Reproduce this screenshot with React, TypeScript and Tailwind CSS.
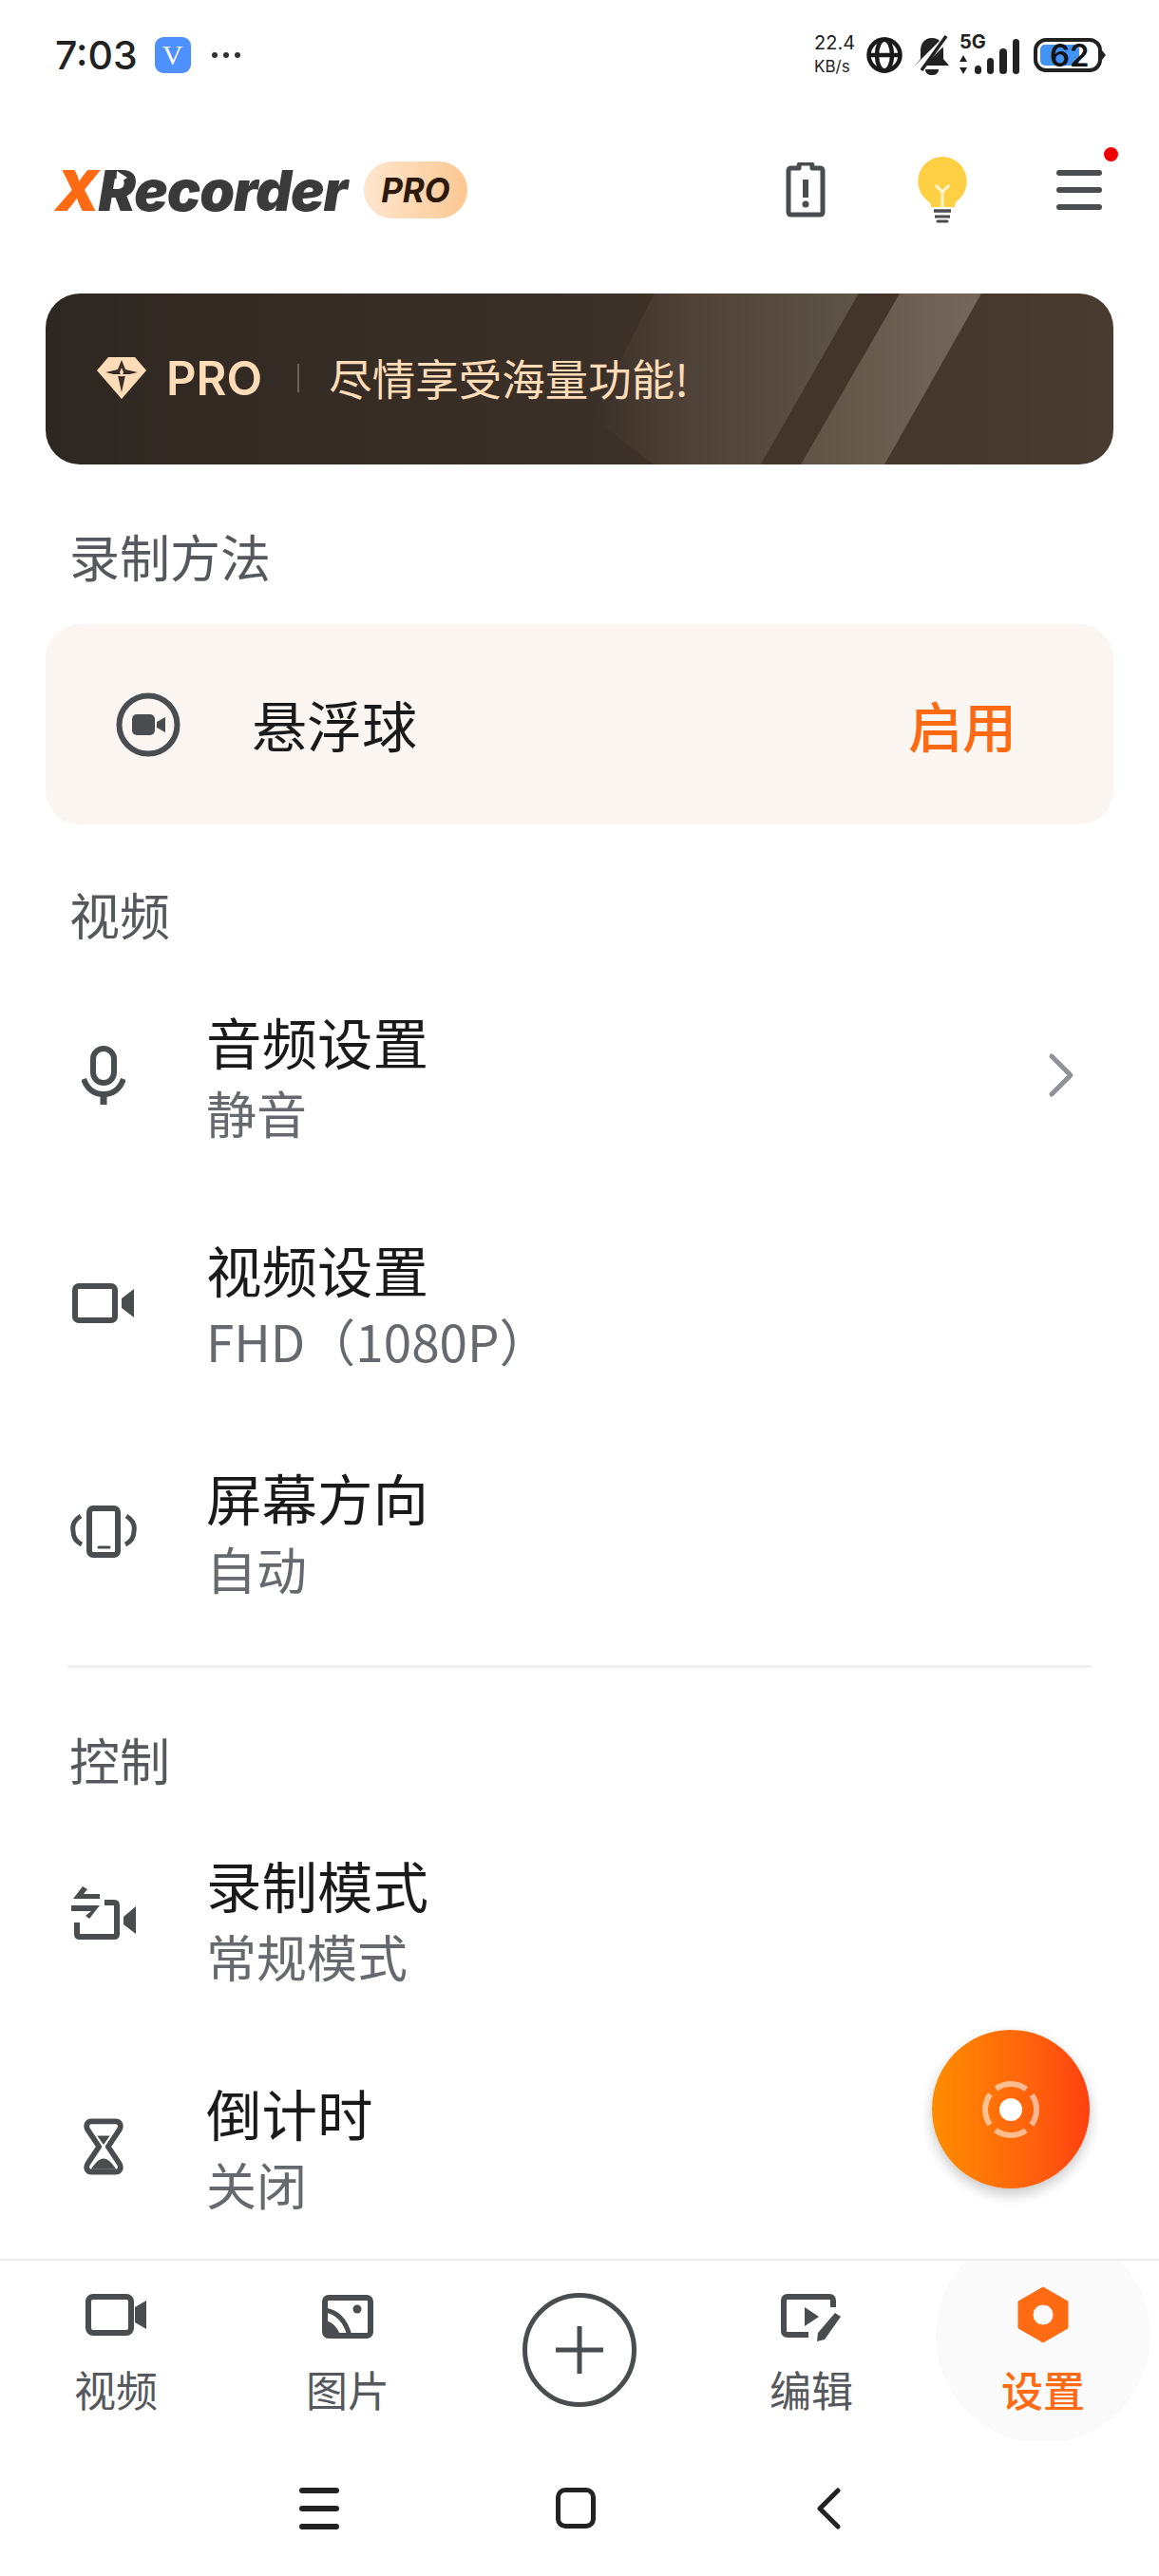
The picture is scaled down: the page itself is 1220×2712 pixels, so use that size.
import type { ReactNode } from 'react';
import { ChevronRight } from 'lucide-react';

const cjk = { fontFamily: '"Noto Sans CJK SC", "Noto Sans", sans-serif' };
const ink = '#4a4d50';

const MicIcon = () => (
  <svg width="46" height="62" viewBox="0 0 46 62" fill="none" stroke={ink} strokeWidth="6">
    <rect x="12" y="3" width="22" height="36" rx="11" />
    <path d="M2 35C6 46 14 51 23 51S40 46 44 35" />
    <path d="M23 51v11" strokeWidth="7" />
  </svg>
);

const CameraIcon = () => (
  <svg width="65" height="42" viewBox="0 0 65 42" fill={ink}>
    <rect x="3" y="3" width="42" height="36" rx="4" fill="none" stroke={ink} strokeWidth="6" />
    <path d="M52 16L65 6v30L52 26z" />
  </svg>
);

const PhoneIcon = () => (
  <svg width="70" height="55" viewBox="0 0 70 55" fill="none" stroke={ink} strokeWidth="6">
    <rect x="20" y="3" width="30" height="49" rx="4" />
    <path d="M30 44h11" strokeWidth="3" strokeLinecap="round" />
    <path d="M11 11C3 16 2 22 3 27c0 6 3 11 9 14" strokeWidth="5" />
    <path d="M59 11c8 5 9 11 8 16 0 6-3 11-9 14" strokeWidth="5" />
  </svg>
);

const SwapCameraIcon = () => (
  <svg className="mb-[14px]" width="68" height="57" viewBox="0 0 68 57" fill={ink}>
    <path d="M35 18h10q3 0 3 3v30q0 3-3 3H9q-3 0-3-3V39" fill="none" stroke={ink} strokeWidth="6" />
    <path d="M55 33L68 22v29L55 41z" />
    <path d="M12 1l5 3-4 5h17v5H2z" />
    <path d="M0 21h30L19 35l-4-3 6-5H0z" />
  </svg>
);

const HourglassIcon = () => (
  <svg width="42" height="60" viewBox="0 0 44 62" fill="none" stroke={ink} strokeWidth="6">
    <path d="M9 3h26c6 0 7 6 4 10L27 31l12 18c3 4 2 10-4 10H9c-6 0-7-6-4-10l12-18L5 13C2 9 3 3 9 3z" strokeLinejoin="round" />
    <path d="M8 56c4-6 9-12 14-12s10 6 14 12z" fill={ink} stroke="none" />
    <path d="M15 19h14l-7 10z" fill={ink} stroke="none" />
  </svg>
);

const RecordDotIcon = () => (
  <svg width="68" height="68" viewBox="0 0 68 68" fill="none">
    <circle cx="34" cy="34" r="30.5" stroke={ink} strokeWidth="6" />
    <rect x="17" y="23" width="24" height="22" rx="5" fill={ink} />
    <path d="M43 31l9-5v16l-9-5z" fill={ink} />
  </svg>
);

const PictureIcon = () => (
  <svg width="54" height="46" viewBox="0 0 54 46" fill="none">
    <rect x="3" y="3" width="48" height="40" rx="4" stroke={ink} strokeWidth="6" />
    <circle cx="37" cy="15" r="4.5" fill={ink} />
    <path d="M3 16c13 2 22 12 26 27" stroke={ink} strokeWidth="5" />
    <path d="M3 27c8 1 14 8 16 16H3z" fill={ink} />
  </svg>
);

const EditIcon = () => (
  <svg width="64" height="50" viewBox="0 0 64 50" fill="none">
    <path d="M55 14V7c0-2-1-4-4-4H7C4 3 3 5 3 7v32c0 2 1 4 4 4h22" stroke={ink} strokeWidth="6" />
    <path d="M25 14l15 10-15 10z" fill={ink} />
    <path d="M57 20l6 4-17 24-8 2 1-9z" fill={ink} />
  </svg>
);

const HexIcon = () => (
  <svg width="54" height="60" viewBox="0 0 54 60">
    <path
      fillRule="evenodd"
      fill="#ff6a13"
      d="M27 1l26 15v28L27 59 1 44V16zM27 19a11 11 0 100 22 11 11 0 000-22z"
      stroke="#ff6a13"
      strokeLinejoin="round"
    />
  </svg>
);

const DiamondIcon = () => (
  <svg width="54" height="46" viewBox="0 0 54 46">
    <path d="M13 1h28l12 14-26 30L1 15z" fill="#ffdcb8" />
    <path d="M27 4l4 10 13 3-13 3-4 18-4-18-13-3 13-3z" fill="#372d25" />
    <path d="M27 12l2 5-2 5-2-5z" fill="#ffdcb8" />
    <path d="M13 20h28" stroke="#ffdcb8" strokeWidth="2" />
  </svg>
);

const BulbIcon = () => (
  <svg width="52" height="70" viewBox="0 0 52 70" fill="none">
    <path d="M26 0a26 26 0 0 1 15 47c-2 2-2 4-2 6H14c0-2 0-4-3-6A26 26 0 0 1 26 0z" fill="#ffcf44" />
    <path d="M26 53V37l-7-7M26 37l7-7" stroke="#fff6d8" strokeWidth="3" />
    <path d="M17 57h18" stroke={ink} strokeWidth="3.5" />
    <path d="M18 63h16" stroke={ink} strokeWidth="3" />
    <path d="M21 68h10" stroke={ink} strokeWidth="3" strokeLinecap="round" />
  </svg>
);

const BatteryAlertIcon = () => (
  <svg width="42" height="58" viewBox="0 0 42 58" fill="none">
    <path d="M14 6V4c0-2 1-3 3-3h8c2 0 3 1 3 3v2h8c2 0 3 1 3 3v43c0 2-1 3-3 3H6c-2 0-3-1-3-3V9c0-2 1-3 3-3z" stroke={ink} strokeWidth="5" strokeLinejoin="round" />
    <path d="M21 18v19" stroke={ink} strokeWidth="6" />
    <circle cx="21" cy="44" r="3.5" fill={ink} />
  </svg>
);

const StatusIcons = () => (
  <div className="flex items-center">
    <div className="flex w-[46px] flex-col text-[#222] text-[20px] leading-[25px]" style={{ fontFamily: 'Inter, sans-serif' }}>
      <span>22.4</span>
      <span className="text-[17px]">KB/s</span>
    </div>
    <svg className="ml-[9px]" width="38" height="38" viewBox="0 0 38 38" fill="none" stroke="#1a1a1a" strokeWidth="4.5">
      <circle cx="19" cy="19" r="16.5" />
      <ellipse cx="19" cy="19" rx="8" ry="16.5" />
      <path d="M2 19h34" />
    </svg>
    <svg className="ml-[12px]" width="38" height="42" viewBox="0 0 38 42" fill="#222">
      <path d="M19 3c-8 0-12 6-12 13v9l-6 7h36l-6-7v-9c0-7-4-13-12-13z" />
      <path d="M12 36h14c0 4-3 6-7 6s-7-2-7-6z" />
      <path d="M3 35L35 3" stroke="#fff" strokeWidth="7" />
      <path d="M8 37L34 1" stroke="#222" strokeWidth="3.5" />
    </svg>
    <div className="relative ml-[10px] h-[42px] w-[64px]">
      <span className="absolute left-0 top-[-4px] text-[20px] font-bold leading-[22px] text-[#222]" style={{ fontFamily: 'Inter, sans-serif' }}>5G</span>
      <svg className="absolute left-0 top-0" width="64" height="42" viewBox="0 0 64 42" fill="#222">
        <path d="M4 21l4 7H0zM4 41l4-7H0z" />
        <rect x="16" y="32" width="7" height="9" rx="3.5" />
        <rect x="29" y="24" width="7" height="17" rx="3.5" />
        <rect x="42" y="14" width="8" height="27" rx="4" />
        <rect x="56" y="4" width="7" height="37" rx="3.5" />
      </svg>
    </div>
    <div className="relative ml-[14px] flex h-[36px] w-[76px] items-center">
      <svg className="absolute left-0 top-0" width="76" height="36" viewBox="0 0 76 36" fill="none">
        <rect x="2" y="2" width="68" height="32" rx="11" stroke="#222" strokeWidth="4" />
        <rect x="7" y="7" width="41" height="22" rx="5" fill="#4393f5" />
        <path d="M72 13l4 5-4 5z" fill="#222" />
      </svg>
      <span className="relative ml-[17px] text-[33px] font-semibold leading-none text-[#141414]" style={{ fontFamily: 'Inter, sans-serif' }}>62</span>
    </div>
  </div>
);

const SectionTitle = ({ children, className }: { children: ReactNode; className: string }) => (
  <h2 className={`pl-[73px] text-[53px] leading-[70px] text-[#55585c] ${className}`}>{children}</h2>
);

const SettingRow = ({ icon, title, sub, arrow }: { icon: ReactNode; title: string; sub: string; arrow?: boolean }) => (
  <div className="flex h-[240px] items-center">
    <div className="flex w-[217px] justify-center">{icon}</div>
    <div className="flex-1 pt-[2px]">
      <div className="text-[58.5px] leading-[76px] text-[#1a1a1a]">{title}</div>
      <div className="text-[53px] leading-[74px] text-[#66696d]">{sub}</div>
    </div>
    {arrow && <ChevronRight className="mr-[63px]" size={80} strokeWidth={1.5} color="#8f9296" />}
  </div>
);

const NavTab = ({ icon, label, pad, active }: { icon: ReactNode; label: string; pad: string; active?: boolean }) => (
  <div className="relative flex flex-col items-center">
    <div className={`flex h-[92px] items-end ${pad}`}>{icon}</div>
    <div className={`mt-[13px] text-[44px] leading-[60px] ${active ? 'font-medium text-[#ff6a13]' : 'text-[#55585c]'}`}>{label}</div>
  </div>
);

export default function App() {
  return (
    <div className="relative flex h-[2712px] w-[1220px] flex-col overflow-hidden bg-white" style={cjk}>
      {/* status bar */}
      <div className="flex h-[116px] shrink-0 items-center justify-between pl-[58px] pr-[56px]">
        <div className="flex items-center">
          <span className="text-[41px] font-medium leading-none text-[#222]" style={{ fontFamily: 'Inter, sans-serif' }}>7:03</span>
          <div className="ml-[18px] flex h-[38px] w-[38px] items-center justify-center rounded-[9px] bg-[#4d90fe] text-[30px] leading-none text-white" style={{ fontFamily: '"Liberation Serif", serif' }}>V</div>
          <div className="ml-[22px] flex gap-[6px]">
            <span className="h-[6px] w-[6px] rounded-full bg-[#333]" />
            <span className="h-[6px] w-[6px] rounded-full bg-[#333]" />
            <span className="h-[6px] w-[6px] rounded-full bg-[#333]" />
          </div>
        </div>
        <StatusIcons />
      </div>

      {/* header */}
      <div className="relative flex h-[168px] shrink-0 items-center pl-[58px]">
        <div className="relative w-[311px] text-[59px] font-black italic leading-none tracking-[-1px] text-[#3a3a3a]" style={{ fontFamily: 'Inter, sans-serif' }}>
          <span className="text-[#ff6a13]">X</span>Recorder
          {/* play mark inside the R */}
          <svg className="absolute left-[64px] top-[9px]" width="12" height="16" viewBox="0 0 12 16" fill="#fff">
            <path d="M1 0l11 7L0 15z" />
          </svg>
        </div>
        <div className="ml-[14px] flex h-[60px] w-[109px] items-center justify-center rounded-full bg-gradient-to-r from-[#fde6cf] to-[#fcc892] text-[35px] font-bold italic text-[#2e1a0c]" style={{ fontFamily: 'Inter, sans-serif' }}>PRO</div>
        <div className="ml-auto flex items-center">
          <BatteryAlertIcon />
          <div className="ml-[97px]"><BulbIcon /></div>
          <div className="relative ml-[94px] flex w-[48px] flex-col gap-[12px]">
            <span className="h-[6px] rounded-full bg-[#4a4d50]" />
            <span className="h-[6px] rounded-full bg-[#4a4d50]" />
            <span className="h-[6px] rounded-full bg-[#4a4d50]" />
            <span className="absolute left-[50px] top-[-24px] h-[15px] w-[15px] rounded-full bg-[#f00000]" />
          </div>
          <div className="w-[60px]" />
        </div>
      </div>

      <div className="min-h-0 flex-1 overflow-hidden">
        {/* pro banner */}
        <div className="relative mx-[48px] mt-[25px] flex h-[180px] items-center overflow-hidden rounded-[36px] bg-gradient-to-r from-[#2e2721] via-[#3b3027] to-[#4a3b30] pb-[2px] pl-[53px]">
          <svg className="absolute left-0 top-0" width="1124" height="180" viewBox="0 0 1124 180">
            <defs>
              <linearGradient id="stripeA" x1="0" x2="1" y1="0" y2="0">
                <stop offset="0" stopColor="#3b3027" />
                <stop offset="0.35" stopColor="#4e4238" />
                <stop offset="1" stopColor="#5f5448" />
              </linearGradient>
              <linearGradient id="stripeB" x1="0" x2="1" y1="0" y2="0">
                <stop offset="0" stopColor="#5f5346" />
                <stop offset="1" stopColor="#74685c" />
              </linearGradient>
            </defs>
            <path d="M641 0H856L753 180H640L575 130z" fill="url(#stripeA)" />
            <path d="M856 0H899L795 180H753z" fill="#42362c" />
            <path d="M899 0H985L883 180H795z" fill="url(#stripeB)" />
          </svg>
          <div className="relative flex items-center">
            <DiamondIcon />
            <span className="ml-[20px] text-[49px] font-semibold leading-none text-[#ffdcb8]" style={{ fontFamily: 'Inter, sans-serif' }}>PRO</span>
            <span className="ml-[37px] h-[30px] w-[2px] bg-[#6e6256]" />
            <span className="ml-[31px] text-[45.5px] leading-none text-[#ffdcb8]">尽情享受海量功能!</span>
          </div>
        </div>

        <SectionTitle className="mt-[61px]">录制方法</SectionTitle>

        <div className="mx-[48px] mt-[37px] flex h-[211px] items-center rounded-[36px] bg-[#fbf6f2] pl-[74px] pr-[102px]">
          <RecordDotIcon />
          <span className="ml-[75px] text-[58px] text-[#1a1a1a]">悬浮球</span>
          <span className="ml-auto text-[57px] font-medium text-[#ff6a13]">启用</span>
        </div>

        <SectionTitle className="mt-[59px]">视频</SectionTitle>
        <div className="mt-[15px]">
          <SettingRow icon={<MicIcon />} title="音频设置" sub="静音" arrow />
          <SettingRow icon={<CameraIcon />} title="视频设置" sub="FHD（1080P）" />
          <SettingRow icon={<PhoneIcon />} title="屏幕方向" sub="自动" />
        </div>

        <div className="mx-[71px] mt-[21px] h-[3px] bg-[#f0f0f0]" />

        <SectionTitle className="mt-[61px]">控制</SectionTitle>
        <div className="mt-[13px]">
          <SettingRow icon={<SwapCameraIcon />} title="录制模式" sub="常规模式" />
          <SettingRow icon={<HourglassIcon />} title="倒计时" sub="关闭" />
        </div>
      </div>

      {/* record button */}
      <div className="absolute left-[981px] top-[2137px] flex h-[167px] w-[166px] items-center justify-center rounded-full bg-gradient-to-r from-[#ff8c00] to-[#ff4010] shadow-[0_6px_14px_rgba(0,0,0,0.22)]">
        <svg width="66" height="66" viewBox="0 0 66 66" fill="none">
          <circle cx="33" cy="33" r="12" fill="#fff" />
          <circle cx="33" cy="33" r="27" stroke="#fff" strokeOpacity="0.55" strokeWidth="6" strokeDasharray="34 8.4" strokeDashoffset="17" />
        </svg>
      </div>

      {/* bottom tabs */}
      <div className="relative h-[192px] shrink-0 overflow-hidden border-t-[2px] border-[#ececec] bg-white">
        <div className="absolute left-[985px] top-[-34px] h-[226px] w-[226px] rounded-full bg-[#fafafa]" />
        <div className="relative grid grid-cols-5">
          <NavTab pad="pb-[13px]" icon={<svg width="64" height="44" viewBox="0 0 64 44" fill={ink}><rect x="3" y="3" width="45" height="38" rx="5" fill="none" stroke={ink} strokeWidth="6" /><path d="M52 14l12-7v30l-12-7z" /></svg>} label="视频" />
          <NavTab pad="pb-[10px]" icon={<PictureIcon />} label="图片" />
          <div className="flex justify-center pt-[34px]">
            <div className="relative flex h-[120px] w-[120px] items-center justify-center rounded-full border-[5px] border-[#4a4d50]">
              <svg width="50" height="50" viewBox="0 0 50 50" stroke={ink} strokeWidth="5"><path d="M25 0v50M0 25h50" /></svg>
            </div>
          </div>
          <NavTab pad="pb-[7px]" icon={<EditIcon />} label="编辑" />
          <NavTab pad="pb-[5px]" icon={<HexIcon />} label="设置" active />
        </div>
      </div>

      {/* system nav */}
      <div className="relative flex h-[142px] shrink-0 items-start bg-white pl-[315px] pt-[49px]">
        <div className="flex w-[42px] flex-col gap-[13px]">
          <span className="h-[6px] rounded-full bg-[#222]" />
          <span className="h-[6px] rounded-full bg-[#222]" />
          <span className="h-[6px] rounded-full bg-[#222]" />
        </div>
        <div className="ml-[228px] h-[43px] w-[42px] rounded-[10px] border-[5px] border-[#222]" />
        <svg className="ml-[232px]" width="26" height="44" viewBox="0 0 26 44" fill="none" stroke="#222" strokeWidth="5" strokeLinecap="round" strokeLinejoin="round">
          <path d="M23 3L4 22l19 19" />
        </svg>
      </div>
    </div>
  );
}
